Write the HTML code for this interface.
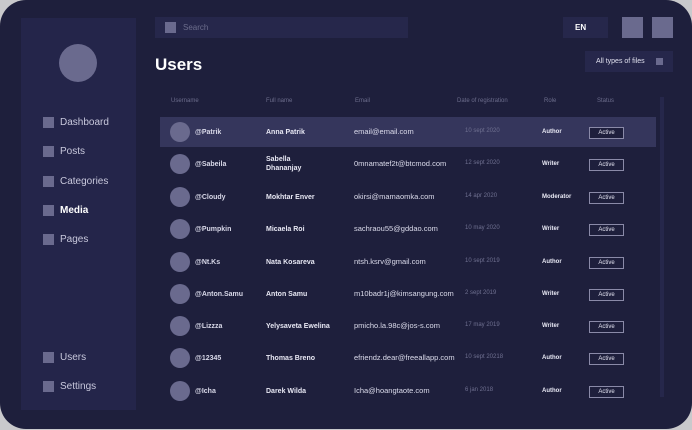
<!DOCTYPE html>
<html><head><style>
*{margin:0;padding:0;box-sizing:border-box}
body{width:692px;height:430px;background:#c9c9cc;font-family:"Liberation Sans",sans-serif;position:relative;overflow:hidden}
.dev{position:absolute;left:0;top:0;width:692px;height:429px;background:#1e1f3c;border-radius:26px}
.side{position:absolute;left:21px;top:18px;width:115px;height:392px;background:#24254a}
.av{position:absolute;left:59px;top:44px;width:38px;height:38px;border-radius:50%;background:#6a6a8e}
.nav{position:absolute;left:43px;font-size:10px;color:#c8c8dc}
.nav i{position:absolute;left:0;top:0;width:11px;height:11px;background:#6a6a8e}
.nav span{position:absolute;left:17px;top:0px;white-space:nowrap}
.box{position:absolute;background:#26274b}
.sq{position:absolute;background:#6a6a8e}
.t{position:absolute;white-space:nowrap}
.h{position:absolute;top:98px;font-size:6px;color:#6c6d8c}
.row{position:absolute;left:160px;width:496px;height:30px}
.row .a{position:absolute;left:10px;top:5px;width:20px;height:20px;border-radius:50%;background:#6a6a8e}
.row .u{position:absolute;left:35px;top:12px;font-size:7px;font-weight:bold;color:#d8d8e8}
.row .f{position:absolute;left:106px;top:11px;font-size:7px;font-weight:bold;color:#e8e8f4;line-height:9px}
.row .e{position:absolute;left:194px;top:10px;font-size:7.5px;color:#dcdcec}
.row .d{position:absolute;left:305px;top:11px;font-size:6px;color:#6f7090}
.row .r{position:absolute;left:382px;top:12px;font-size:6px;font-weight:bold;color:#e8e8f4}
.row .s{position:absolute;left:429px;top:10px;width:35px;height:12px;border:1px solid #8a8aa8;font-size:6px;color:#e0e0ee;text-align:center;line-height:10px;background:#1e1f3c}
</style></head><body>
<div class="dev"></div>
<div class="side"></div>
<div class="av"></div>
<div class="nav" style="top:117px"><i></i><span>Dashboard</span></div>
<div class="nav" style="top:146px"><i></i><span>Posts</span></div>
<div class="nav" style="top:176px"><i></i><span>Categories</span></div>
<div class="nav" style="top:205px"><i></i><span style="font-weight:bold;color:#fff">Media</span></div>
<div class="nav" style="top:234px"><i></i><span>Pages</span></div>
<div class="nav" style="top:352px"><i></i><span>Users</span></div>
<div class="nav" style="top:381px"><i></i><span>Settings</span></div>

<div class="box" style="left:155px;top:17px;width:253px;height:21px"></div>
<div class="sq" style="left:165px;top:22px;width:11px;height:11px"></div>
<div class="t" style="left:183px;top:23px;font-size:8px;color:#6c6d8c">Search</div>
<div class="box" style="left:563px;top:17px;width:45px;height:21px"></div>
<div class="t" style="left:575px;top:23px;font-size:8px;font-weight:bold;color:#fff">EN</div>
<div class="sq" style="left:622px;top:17px;width:21px;height:21px"></div>
<div class="sq" style="left:652px;top:17px;width:21px;height:21px"></div>
<div class="t" style="left:155px;top:55px;font-size:17px;font-weight:bold;color:#fff">Users</div>
<div class="box" style="left:585px;top:51px;width:88px;height:21px"></div>
<div class="t" style="left:596px;top:58px;font-size:7px;color:#e0e0ee">All types of files</div>
<div class="sq" style="left:656px;top:58px;width:7px;height:7px"></div>
<div style="position:absolute;left:660px;top:97px;width:4px;height:300px;background:#26274b"></div>

<div class="h" style="left:171px">Username</div>
<div class="h" style="left:266px">Full name</div>
<div class="h" style="left:355px">Email</div>
<div class="h" style="left:457px">Date of registration</div>
<div class="h" style="left:544px">Role</div>
<div class="h" style="left:597px">Status</div>

<div class="row" style="top:117px;background:#35365c"><div class="a"></div><div class="u">@Patrik</div><div class="f">Anna Patrik</div><div class="e">email@email.com</div><div class="d">10 sept 2020</div><div class="r">Author</div><div class="s">Active</div></div>
<div class="row" style="top:149px"><div class="a"></div><div class="u">@Sabeila</div><div class="f" style="top:6px">Sabella<br>Dhananjay</div><div class="e">0mnamatef2t@btcmod.com</div><div class="d">12 sept 2020</div><div class="r">Writer</div><div class="s">Active</div></div>
<div class="row" style="top:182px"><div class="a"></div><div class="u">@Cloudy</div><div class="f">Mokhtar Enver</div><div class="e">okirsi@mamaomka.com</div><div class="d">14 apr 2020</div><div class="r">Moderator</div><div class="s">Active</div></div>
<div class="row" style="top:214px"><div class="a"></div><div class="u">@Pumpkin</div><div class="f">Micaela Roi</div><div class="e">sachraou55@gddao.com</div><div class="d">10 may 2020</div><div class="r">Writer</div><div class="s">Active</div></div>
<div class="row" style="top:247px"><div class="a"></div><div class="u">@Nt.Ks</div><div class="f">Nata Kosareva</div><div class="e">ntsh.ksrv@gmail.com</div><div class="d">10 sept 2019</div><div class="r">Author</div><div class="s">Active</div></div>
<div class="row" style="top:279px"><div class="a"></div><div class="u">@Anton.Samu</div><div class="f">Anton Samu</div><div class="e">m10badr1j@kimsangung.com</div><div class="d">2 sept 2019</div><div class="r">Writer</div><div class="s">Active</div></div>
<div class="row" style="top:311px"><div class="a"></div><div class="u">@Lizzza</div><div class="f">Yelysaveta Ewelina</div><div class="e">pmicho.la.98c@jos-s.com</div><div class="d">17 may 2019</div><div class="r">Writer</div><div class="s">Active</div></div>
<div class="row" style="top:343px"><div class="a"></div><div class="u">@12345</div><div class="f">Thomas Breno</div><div class="e">efriendz.dear@freeallapp.com</div><div class="d">10 sept 20218</div><div class="r">Author</div><div class="s">Active</div></div>
<div class="row" style="top:376px"><div class="a"></div><div class="u">@Icha</div><div class="f">Darek Wilda</div><div class="e">Icha@hoangtaote.com</div><div class="d">6 jan 2018</div><div class="r">Author</div><div class="s">Active</div></div>
</body></html>
